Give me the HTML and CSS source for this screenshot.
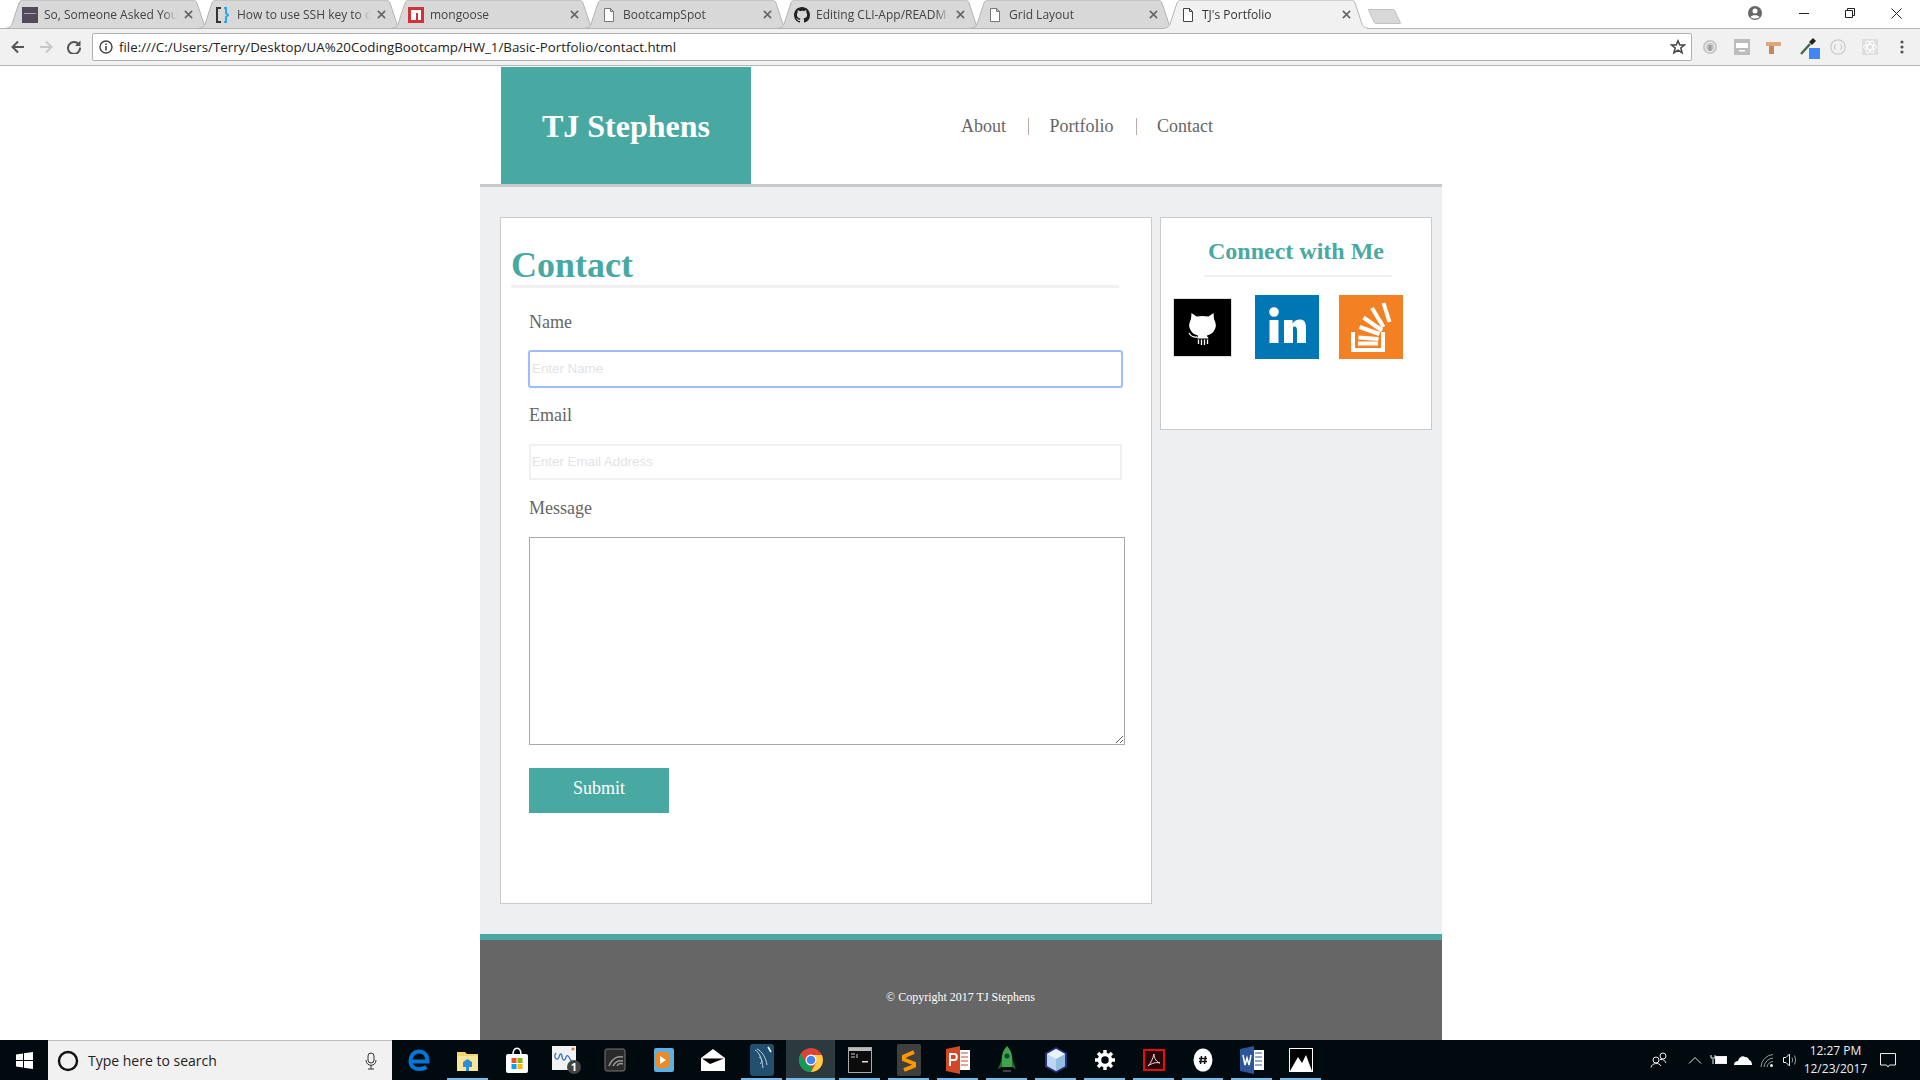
FILE: index.html
```html
<!DOCTYPE html>
<html lang="en">
<head>
<meta charset="utf-8">
<title>TJ's Portfolio</title>
<link rel="stylesheet" href="styles.css">
</head>
<body>
<div class="screen">
  <div class="tabstrip">
    <div class="tab">
      <svg class="tab-shape" viewBox="0 0 204 29"><path d="M0 28C4 28 5 26 6 24L13 3C14 1 15 0 17 0H187C189 0 190 1 191 3L198 24C199 26 200 28 204 28"/></svg>
      <svg class="fav" viewBox="0 0 16 16"><rect x="0" y="0" width="16" height="16" fill="#514a5c"/><rect x="2" y="6" width="12" height="1" fill="#aaa"/></svg>
      <span class="tab-title">So, Someone Asked You t</span>
      <svg class="tab-x" viewBox="0 0 10 10"><path d="M1 1L9 9M9 1L1 9"/></svg>
    </div>
    <div class="tab">
      <svg class="tab-shape" viewBox="0 0 204 29"><path d="M0 28C4 28 5 26 6 24L13 3C14 1 15 0 17 0H187C189 0 190 1 191 3L198 24C199 26 200 28 204 28"/></svg>
      <svg class="fav" viewBox="0 0 16 16"><path d="M6 1H2V15H6" fill="none" stroke="#333" stroke-width="2"/><path d="M9 1H11V6L13 8L11 10V15H9" fill="none" stroke="#2ea8e8" stroke-width="2"/></svg>
      <span class="tab-title">How to use SSH key to c</span>
      <svg class="tab-x" viewBox="0 0 10 10"><path d="M1 1L9 9M9 1L1 9"/></svg>
    </div>
    <div class="tab">
      <svg class="tab-shape" viewBox="0 0 204 29"><path d="M0 28C4 28 5 26 6 24L13 3C14 1 15 0 17 0H187C189 0 190 1 191 3L198 24C199 26 200 28 204 28"/></svg>
      <svg class="fav" viewBox="0 0 16 16"><rect width="16" height="16" fill="#cf3338"/><path d="M3 13V3H13V13H10V6H8V13Z" fill="#fff"/></svg>
      <span class="tab-title">mongoose</span>
      <svg class="tab-x" viewBox="0 0 10 10"><path d="M1 1L9 9M9 1L1 9"/></svg>
    </div>
    <div class="tab">
      <svg class="tab-shape" viewBox="0 0 204 29"><path d="M0 28C4 28 5 26 6 24L13 3C14 1 15 0 17 0H187C189 0 190 1 191 3L198 24C199 26 200 28 204 28"/></svg>
      <svg class="fav" viewBox="0 0 16 16"><path d="M3.5 1.5H9.5L12.5 4.5V14.5H3.5ZM9.5 1.5V4.5H12.5" fill="#fff" stroke="#777"/></svg>
      <span class="tab-title">BootcampSpot</span>
      <svg class="tab-x" viewBox="0 0 10 10"><path d="M1 1L9 9M9 1L1 9"/></svg>
    </div>
    <div class="tab">
      <svg class="tab-shape" viewBox="0 0 204 29"><path d="M0 28C4 28 5 26 6 24L13 3C14 1 15 0 17 0H187C189 0 190 1 191 3L198 24C199 26 200 28 204 28"/></svg>
      <svg class="fav" viewBox="0 0 16 16"><path fill="#222" d="M8 0C3.58 0 0 3.58 0 8c0 3.54 2.29 6.53 5.47 7.59.4.07.55-.17.55-.38v-1.34c-2.23.48-2.69-1.07-2.69-1.07-.36-.93-.89-1.17-.89-1.17-.73-.5.05-.49.05-.49.8.06 1.23.82 1.23.82.71 1.22 1.87.87 2.33.66.07-.52.28-.87.51-1.07-1.78-.2-3.64-.89-3.64-3.95 0-.87.31-1.59.82-2.15-.08-.2-.36-1.02.08-2.12 0 0 .67-.21 2.2.82A7.6 7.6 0 0 1 8 3.87c.68 0 1.36.09 2 .27 1.53-1.04 2.2-.82 2.2-.82.44 1.1.16 1.92.08 2.12.51.56.82 1.27.82 2.15 0 3.07-1.87 3.75-3.65 3.95.29.25.54.73.54 1.48v2.2c0 .21.15.46.55.38A8 8 0 0 0 16 8c0-4.42-3.58-8-8-8z"/></svg>
      <span class="tab-title">Editing CLI-App/READM</span>
      <svg class="tab-x" viewBox="0 0 10 10"><path d="M1 1L9 9M9 1L1 9"/></svg>
    </div>
    <div class="tab">
      <svg class="tab-shape" viewBox="0 0 204 29"><path d="M0 28C4 28 5 26 6 24L13 3C14 1 15 0 17 0H187C189 0 190 1 191 3L198 24C199 26 200 28 204 28"/></svg>
      <svg class="fav" viewBox="0 0 16 16"><path d="M3.5 1.5H9.5L12.5 4.5V14.5H3.5ZM9.5 1.5V4.5H12.5" fill="#fff" stroke="#777"/></svg>
      <span class="tab-title">Grid Layout</span>
      <svg class="tab-x" viewBox="0 0 10 10"><path d="M1 1L9 9M9 1L1 9"/></svg>
    </div>
    <div class="tab tab-active">
      <svg class="tab-shape" viewBox="0 0 204 29"><path d="M0 29V28C4 28 5 26 6 24L13 3C14 1 15 0 17 0H187C189 0 190 1 191 3L198 24C199 26 200 28 204 28V29"/></svg>
      <svg class="fav" viewBox="0 0 16 16"><path d="M3.5 1.5H9.5L12.5 4.5V14.5H3.5ZM9.5 1.5V4.5H12.5" fill="#fff" stroke="#444"/></svg>
      <span class="tab-title">TJ's Portfolio</span>
      <svg class="tab-x" viewBox="0 0 10 10"><path d="M1 1L9 9M9 1L1 9"/></svg>
    </div>
    <div class="newtab"></div>
    <div class="winctl">
      <div class="winbtn winbtn-person"><svg width="14" height="14" viewBox="0 0 14 14"><circle cx="7" cy="7" r="7" fill="#666"/><circle cx="7" cy="5" r="2.5" fill="#fff"/><path d="M2.5 11C3.5 8.7 10.5 8.7 11.5 11C9 13 5 13 2.5 11Z" fill="#fff"/></svg></div>
      <div class="winbtn"><svg width="10" height="10" viewBox="0 0 10 10"><path d="M0 5.5H10" stroke="#222"/></svg></div>
      <div class="winbtn"><svg width="10" height="10" viewBox="0 0 10 10"><path d="M.5 2.5H7.5V9.5H.5ZM2.5 2.5V.5H9.5V7.5H7.5" fill="none" stroke="#222"/></svg></div>
      <div class="winbtn"><svg width="11" height="11" viewBox="0 0 11 11"><path d="M.5 .5L10.5 10.5M10.5 .5L.5 10.5" stroke="#222"/></svg></div>
    </div>
  </div>

  <div class="toolbar">
    <div class="tool"><svg width="14" height="14" viewBox="0 0 14 14"><path d="M13 7H2M7 1.500L1.500 7L7 12.500" fill="none" stroke="#555" stroke-width="2"/></svg></div>
    <div class="tool"><svg width="14" height="14" viewBox="0 0 14 14"><path d="M1 7H12M7 1.500L12.500 7L7 12.500" fill="none" stroke="#c8c8c8" stroke-width="2"/></svg></div>
    <div class="tool"><svg width="14" height="14" viewBox="0 0 14 14"><path d="M11.500 4A6 6 0 1 0 13 7.500" fill="none" stroke="#555" stroke-width="2"/><path d="M13.500 .5V6H8Z" fill="#555"/></svg></div>
    <div class="omnibox">
      <svg class="omni-info" width="14" height="14" viewBox="0 0 14 14"><circle cx="7" cy="7" r="6" fill="none" stroke="#444" stroke-width="1.400"/><path d="M7 6V10.500M7 3.500V5" stroke="#444" stroke-width="1.600"/></svg>
      <span class="url">file:///C:/Users/Terry/Desktop/UA%20CodingBootcamp/HW_1/Basic-Portfolio/contact.html</span>
      <svg class="omni-star" width="16" height="16" viewBox="0 0 16 16"><path d="M8 1.800L9.800 6H14.500L10.800 9L12.100 13.800L8 11.100L3.900 13.800L5.200 9L1.500 6H6.200Z" fill="none" stroke="#444" stroke-width="1.500"/></svg>
    </div>
    <div class="ext-row">
      <div class="ext"><svg width="16" height="16" viewBox="0 0 16 16"><circle cx="8" cy="8" r="7" fill="#c4c4c4"/><circle cx="8" cy="8" r="4.600" fill="none" stroke="#eee" stroke-width="1.200"/><rect x="6.600" y="6" width="2.800" height="6" fill="#999"/></svg></div>
      <div class="ext"><svg width="16" height="16" viewBox="0 0 16 16"><rect width="16" height="16" fill="#bcbcbc"/><rect x="2" y="4" width="12" height="5" fill="#fff"/><rect x="5" y="11" width="6" height="1.500" fill="#fff"/></svg></div>
      <div class="ext"><svg width="16" height="16" viewBox="0 0 16 16"><path d="M0 3H15V7H8V15H3V7H0Z" fill="#dca779"/><path d="M3 7H8V15H3Z" fill="#c18a5c"/></svg></div>
      <div class="ext ext-picker"><svg width="24" height="24" viewBox="0 0 24 24"><path d="M3 19L12 9" stroke="#3e6a4a" stroke-width="2.400"/><path d="M11 7L15 3L18 6L14 10Z" fill="#222"/><rect x="11" y="13" width="11" height="11" fill="#4285f4"/></svg></div>
      <div class="ext"><svg width="16" height="16" viewBox="0 0 16 16"><circle cx="8" cy="8" r="7.200" fill="none" stroke="#c8c8c8" stroke-width="1.200"/><path d="M5.500 5.500C4.500 5.500 5 8 4 8C5 8 4.500 10.500 5.500 10.500M10.500 5.500C11.500 5.500 11 8 12 8C11 8 11.500 10.500 10.500 10.500" fill="none" stroke="#bbb"/></svg></div>
      <div class="ext"><svg width="16" height="16" viewBox="0 0 16 16"><rect width="16" height="16" fill="#dedede"/><ellipse cx="8" cy="8" rx="6.500" ry="2.600" fill="none" stroke="#fff"/><ellipse cx="8" cy="8" rx="6.500" ry="2.600" fill="none" stroke="#fff" transform="rotate(60 8 8)"/><ellipse cx="8" cy="8" rx="6.500" ry="2.600" fill="none" stroke="#fff" transform="rotate(120 8 8)"/></svg></div>
      <div class="ext"><svg width="4" height="14" viewBox="0 0 4 14"><circle cx="2" cy="2" r="1.600" fill="#555"/><circle cx="2" cy="7" r="1.600" fill="#555"/><circle cx="2" cy="12" r="1.600" fill="#555"/></svg></div>
    </div>
  </div>

  <div class="viewport">
    <div class="wrapper">
      <header class="site-header">
        <div class="brand">TJ Stephens</div>
        <nav class="site-nav">
          <a class="nav-link">About</a>
          <a class="nav-link">Portfolio</a>
          <a class="nav-link nav-last">Contact</a>
        </nav>
      </header>
      <main class="main">
        <section class="card contact-card">
          <h1 class="contact-title">Contact</h1>
          <form class="contact-form">
            <label class="field-label">Name</label>
            <input class="field field-focus" type="text" placeholder="Enter Name">
            <label class="field-label">Email</label>
            <input class="field" type="text" placeholder="Enter Email Address">
            <label class="field-label">Message</label>
            <textarea class="message"></textarea>
            <button class="submit" type="button">Submit</button>
          </form>
        </section>
        <aside class="card side-card">
          <h2 class="side-title">Connect with Me</h2>
          <hr class="side-rule">
          <div class="social">
            <svg class="soc-gh" width="59" height="59" viewBox="0 0 59 59"><rect x=".5" y=".5" width="58" height="58" fill="#000" stroke="#ddd"/><path d="M18.500 15L23.500 18.500Q29.500 17.500 35.500 18.500L40.500 15L41 21Q44 27 42 31Q40 36 34 37.500L35 41H24L25 37.500Q19 36 17 31Q15 27 18 21Z" fill="#fff"/><path d="M16 35Q19 40 24 39M25.500 39V46M28.500 39V47M31.500 39V47M34.500 39V46" fill="none" stroke="#fff" stroke-width="1.300"/><path d="M24 41H35" stroke="#000" stroke-width="1"/></svg>
            <svg class="soc-li" width="64" height="64" viewBox="0 0 64 64"><rect width="64" height="64" fill="#0077b5"/><circle cx="19" cy="17" r="4.800" fill="#fff"/><rect x="14.500" y="25" width="9" height="23" fill="#fff"/><path d="M29 25H37.500V28.500C39 26 42 24.500 45 24.500C51 24.500 51 30 51 34V48H42V36C42 33 41.500 31.500 39.500 31.500C37.500 31.500 38 33 38 36V48H29Z" fill="#fff"/></svg>
            <svg class="soc-so" width="64" height="64" viewBox="0 0 64 64"><rect width="64" height="64" fill="#f48024"/><path d="M14 37V55H44V37" fill="none" stroke="#fff" stroke-width="4"/><path d="M19 48.500H39M19.500 42.500L39.500 44M20.500 32L40.500 39M24.500 22.500L43 35.500M33 13L44.500 32M44.500 8L50.500 27" fill="none" stroke="#fff" stroke-width="4"/></svg>
          </div>
        </aside>
      </main>
      <footer class="site-footer">© Copyright 2017 TJ Stephens</footer>
    </div>
  </div>

  <div class="taskbar">
    <div class="start"><svg width="17" height="17" viewBox="0 0 17 17"><path d="M0 2.500L7 1.500V8H0ZM8 1.300L17 0V8H8ZM0 9H7V15.500L0 14.500ZM8 9H17V17L8 15.700Z" fill="#fff"/></svg></div>
    <div class="searchbox">
      <svg class="search-ring" width="22" height="22" viewBox="0 0 22 22"><circle cx="11" cy="11" r="9" fill="none" stroke="#111" stroke-width="2.400"/></svg>
      <span class="search-text">Type here to search</span>
      <svg class="search-mic" width="12" height="18" viewBox="0 0 12 18"><rect x="3" y="1" width="6" height="10" rx="3" fill="none" stroke="#333"/><path d="M1 8C1 15 11 15 11 8M6 13V17M3 17H9" fill="none" stroke="#333"/></svg>
    </div>
    <div class="apps">
      <div class="app"><svg width="24" height="24" viewBox="0 0 24 24"><path d="M3.500 13.500H20.500C20.500 7 17 3.500 12 3.500C7 3.500 3.500 7.500 3.500 13C3.500 18 7 21 12.500 21C15.500 21 18 20 19.500 19" fill="none" stroke="#0078d7" stroke-width="4"/></svg></div>
      <div class="app app-run"><svg width="24" height="24" viewBox="0 0 24 24"><path d="M1 4H9L11 6H22V23H1Z" fill="#f6d56a"/><rect x="1" y="8" width="21" height="15" fill="#fbe59a"/><path d="M7 19V14L11.500 11L16 14V19H13V23H10V19Z" fill="#2a8fd4"/></svg></div>
      <div class="app"><svg width="24" height="26" viewBox="0 0 24 26"><path d="M8 8C8 -1 16 -1 16 8" fill="none" stroke="#fff" stroke-width="1.500"/><rect x="1" y="7" width="22" height="19" rx="2" fill="#fff"/><rect x="6.500" y="11" width="5" height="5" fill="#f25022"/><rect x="12.500" y="11" width="5" height="5" fill="#7fba00"/><rect x="6.500" y="17" width="5" height="5" fill="#00a4ef"/><rect x="12.500" y="17" width="5" height="5" fill="#ffb900"/></svg></div>
      <div class="app"><svg width="32" height="32" viewBox="0 0 32 32"><rect x="2" y="2" width="24" height="24" fill="#f2f2f2"/><path d="M6 9C3 13 7 18 9 13C10 9 12 9 12 13C13 17 15 17 16 13C17 9 20 14 22 19" fill="none" stroke="#3a78b8" stroke-width="1.300"/><circle cx="23" cy="5" r="1.600" fill="#e8743b"/><circle cx="24" cy="23" r="7" fill="#444"/><text class="badge-num" x="24" y="27">1</text></svg></div>
      <div class="app"><svg width="22" height="24" viewBox="0 0 22 24"><rect x="1" y="1" width="20" height="22" rx="2" fill="#2a2a2a" stroke="#777"/><path d="M5 18C8 10 14 8 19 9M9 18C11 14 14 12 19 13M13 18C14 16 16 15 19 16" fill="none" stroke="#999" stroke-width="1.500"/></svg></div>
      <div class="app"><svg width="22" height="26" viewBox="0 0 22 26"><rect x="1" y="1" width="20" height="24" rx="2" fill="#5db0e0"/><rect x="3" y="5" width="13" height="16" rx="3" fill="#f08a24"/><path d="M7 9L13 13L7 17Z" fill="#fff"/></svg></div>
      <div class="app"><svg width="24" height="22" viewBox="0 0 24 22"><path d="M0 9L12 0L24 9V22H0Z" fill="#fff"/><path d="M1 9.500L23 9.500L9 15Z" fill="#000"/></svg></div>
      <div class="app app-run"><svg width="24" height="32" viewBox="0 0 24 32"><rect width="24" height="32" rx="3" fill="#21506f"/><path d="M5 6C9 8 12 14 13 24M7 5C12 7 16 14 17 21M9 13C12 14 13 18 10 20" fill="none" stroke="#b9cfe0"/><path d="M18 3L21 8" stroke="#fff" stroke-width="1.500"/></svg></div>
      <div class="app app-run app-active"><svg width="24" height="24" viewBox="0 0 24 24"><circle cx="12" cy="12" r="12" fill="#db4437"/><path d="M12 24A12 12 0 0 1 1.600 6L7 15Q10 19 13 18Z" fill="#0f9d58"/><path d="M12 24L17.500 14L12 7H22.800A12 12 0 0 1 12 24Z" fill="#ffcd40"/><circle cx="12" cy="12" r="5.500" fill="#fff"/><circle cx="12" cy="12" r="4.300" fill="#4285f4"/></svg></div>
      <div class="app app-run"><svg width="24" height="26" viewBox="0 0 24 26"><rect x=".5" y=".5" width="23" height="25" fill="#0c0c0c" stroke="#aaa"/><rect x="1" y="1" width="22" height="3" fill="#bbb"/><rect x="14" y="14" width="6" height="1.500" fill="#ddd"/><path d="M3 7H7M3 10H7M9 7V11" stroke="#ccc"/></svg></div>
      <div class="app app-run"><svg width="24" height="32" viewBox="0 0 24 32"><rect width="24" height="32" rx="2" fill="#3f3f3f"/><path d="M17 8L7 12.500V15.500L17 19.500V22L7 26" fill="none" stroke="#ff9800" stroke-width="4"/></svg></div>
      <div class="app app-run"><svg width="24" height="28" viewBox="0 0 24 28"><path d="M0 3L14 0V28L0 25Z" fill="#d24726"/><rect x="14" y="4" width="10" height="20" fill="#fff"/><path d="M15 7H22M15 11H22M15 15H22M15 19H22" stroke="#d24726"/><path d="M4 20V8H8.500C11.500 8 11.500 14 8.500 14H4" fill="none" stroke="#fff" stroke-width="2"/></svg></div>
      <div class="app app-run"><svg width="20" height="30" viewBox="0 0 20 30"><path d="M10 1C15 6 16 12 15 22H5C4 12 5 6 10 1Z" fill="#3fa34d"/><circle cx="10" cy="11" r="2.500" fill="#143"/><path d="M5 14L1 24L5 22M15 14L19 24L15 22" fill="#236b30"/><rect x="6" y="25" width="8" height="2" fill="#444"/></svg></div>
      <div class="app app-run"><svg width="24" height="28" viewBox="0 0 24 28"><path d="M12 1L23 7V21L12 27L1 21V7Z" fill="#2c2f7c"/><path d="M12 3L21 8V20L12 25L3 20V8Z" fill="#bcd7ef"/><path d="M12 13L21 8V20L12 25Z" fill="#90bde0"/><path d="M3 8L12 3L21 8L12 13Z" fill="#e8f3fb"/></svg></div>
      <div class="app app-run"><svg width="20" height="20" viewBox="0 0 20 20"><circle cx="10" cy="10" r="5.500" fill="none" stroke="#fff" stroke-width="3.500"/><path d="M10 0V4M10 16V20M0 10H4M16 10H20M3 3L5.800 5.800M14.200 14.200L17 17M17 3L14.200 5.800M5.800 14.200L3 17" stroke="#fff" stroke-width="3.400"/></svg></div>
      <div class="app app-run"><svg width="22" height="22" viewBox="0 0 22 22"><rect x="1" y="1" width="20" height="20" fill="#2a0505" stroke="#e01010" stroke-width="2"/><path d="M11 5C10 9 8 14 5 17C9 14 13 13 17 14C14 13 11 10 11 5Z" fill="none" stroke="#e8d8d8"/></svg></div>
      <div class="app app-run"><svg width="20" height="24" viewBox="0 0 20 24"><ellipse cx="10" cy="12" rx="9.500" ry="11.500" fill="#fff"/><path d="M8.500 8L7.500 16M12.500 8L11.500 16M6 10.500H14M6 13.500H14" stroke="#111" stroke-width="1.500"/></svg></div>
      <div class="app app-run"><svg width="24" height="28" viewBox="0 0 24 28"><path d="M0 3L14 0V28L0 25Z" fill="#2b579a"/><rect x="14" y="4" width="10" height="20" fill="#fff"/><path d="M15 7H22M15 11H22M15 15H22M15 19H22" stroke="#2b579a"/><path d="M3 9L5 19L7 12L9 19L11 9" fill="none" stroke="#fff" stroke-width="1.500"/></svg></div>
      <div class="app app-run"><svg width="24" height="24" viewBox="0 0 24 24"><rect width="24" height="24" fill="#000" stroke="#fff" stroke-width="2"/><path d="M1 23L9 9L13 15L17 7L23 23Z" fill="#fff"/></svg></div>
    </div>
    <div class="tray">
      <div class="tray-item tray-people"><svg width="18" height="16" viewBox="0 0 18 16"><circle cx="6" cy="8" r="3" fill="none" stroke="#eee"/><circle cx="13" cy="4" r="3" fill="none" stroke="#eee"/><path d="M1 15.500C1.500 11 9 10 11 14M10 7.500C13 7 15 8.500 16 11" fill="none" stroke="#eee"/></svg></div>
      <div class="tray-item"><svg width="14" height="8" viewBox="0 0 14 8"><path d="M1 7.500L7 1.500L13 7.500" fill="none" stroke="#ddd"/></svg></div>
      <div class="tray-item"><svg width="18" height="12" viewBox="0 0 18 12"><rect x="5.500" y="2.500" width="11" height="7" fill="#fff" stroke="#eee"/><path d="M1 1V4H5V1M3 5V10" fill="none" stroke="#eee"/></svg></div>
      <div class="tray-item"><svg width="18" height="10" viewBox="0 0 18 10"><path d="M0 10C0 7 2 6 4 6C5 2 9 0 11 2C14 2 15 4 15 5C17 5 18 8 18 10Z" fill="#fff"/></svg></div>
      <div class="tray-item"><svg width="14" height="14" viewBox="0 0 14 14"><path d="M1 14A13 13 0 0 1 13 1.500M4 14A10 10 0 0 1 13 5M7 14A7 7 0 0 1 13 8.500" fill="none" stroke="#999"/><circle cx="11.500" cy="12.500" r="1.500" fill="#eee"/></svg></div>
      <div class="tray-item"><svg width="16" height="14" viewBox="0 0 16 14"><path d="M.5 4.500H3L6.500 1V13L3 9.500H.5Z" fill="none" stroke="#eee"/><path d="M9 4.500Q10.500 7 9 9.500M11.500 2.500Q14 7 11.500 11.500" fill="none" stroke="#999"/></svg></div>
      <div class="clock"><span>12:27 PM</span><span>12/23/2017</span></div>
      <div class="notify"><svg width="16" height="15" viewBox="0 0 16 15"><path d="M.5 .5H15.500V12H9.500L8 14L6.500 12H.5Z" fill="none" stroke="#eee"/></svg></div>
    </div>
  </div>
</div>
</body>
</html>
```

FILE: styles.css
```css
* { box-sizing: border-box; }
html, body { margin: 0; height: 100%; overflow: hidden; background: #fff; }

.screen { width: 1920px; height: 1080px; display: flex; flex-direction: column; overflow: hidden; }

/* browser chrome */
.tabstrip {
  height: 29px; flex: none; display: flex; padding-left: 6px; background: #fff;
  box-shadow: inset 0 -1px 0 #b4b4b4;
  font: 12px "Open Sans", "Noto Sans", sans-serif; color: #444;
}
.tab { position: relative; width: 204px; height: 29px; margin-right: -11px; padding-left: 16px; display: flex; align-items: center; flex: none; }
.tab-shape { position: absolute; left: 0; top: 0; width: 204px; height: 29px; }
.tab-shape path { fill: #d8d8d8; stroke: #b4b4b4; stroke-width: 1; }
.tab-active { z-index: 2; color: #333; }
.tab-active .tab-shape path { fill: #f1f1f1; }
.fav { position: relative; width: 16px; height: 16px; flex: none; margin-right: 6px; }
.tab-title {
  position: relative; width: 133px; white-space: nowrap; flex: none;
  -webkit-mask-image: linear-gradient(to right, #000 90%, transparent);
  mask-image: linear-gradient(to right, #000 90%, transparent);
}
.tab-x { position: relative; width: 9px; height: 9px; margin-left: 7px; flex: none; }
.tab-x path { stroke: #666; stroke-width: 1.800; fill: none; }
.newtab {
  width: 27px; height: 15px; margin: 9px 0 0 14px; flex: none; background: #d8d8d8;
  border: 1px solid #c0c0c0; border-radius: 2px; transform: skewX(25deg);
}
.winctl { margin-left: auto; display: flex; padding-right: 1px; height: 26px; }
.winbtn { width: 46px; display: flex; align-items: center; justify-content: center; }
.winbtn-person { margin-right: 3px; }

.toolbar {
  height: 37px; flex: none; display: flex; align-items: center; padding-left: 4px;
  background: #f1f1f1; border-bottom: 1px solid #b4b4b4;
}
.tool { width: 28px; display: flex; justify-content: center; }
.omnibox {
  width: 1600px; height: 28px; margin-left: 4px; background: #fff; border: 1px solid #b0b0b0; border-radius: 2px;
  display: flex; align-items: center; padding: 0 5px 0 6px;
}
.omni-info { flex: none; margin-right: 6px; }
.url { font: 13.33px "Open Sans", "Noto Sans", sans-serif; color: #222; white-space: nowrap; flex: 1; }
.omni-star { flex: none; }
.ext-row { display: flex; margin-left: 2px; }
.ext { width: 32px; display: flex; align-items: center; justify-content: center; height: 28px; }
.ext-picker svg { margin-left: 8px; }

/* page */
.viewport { flex: 1; min-height: 0; overflow: hidden; background: #fff; }
.wrapper { width: 962px; margin: 0 auto 0 480px; padding-top: 1px; font-family: "Liberation Serif", "Times New Roman", serif; }
.site-header { height: 120px; display: flex; padding-left: 21px; border-bottom: 3px solid #c9c9c9; background: #fff; }
.brand {
  width: 250px; background: #48a9a3; color: #fff; font-size: 32px; font-weight: bold; padding-top: 2px;
  display: flex; align-items: center; justify-content: center;
}
.site-nav { display: flex; align-items: center; margin-left: 210px; padding-top: 2px; }
.nav-link { font-size: 18px; color: #666; padding-right: 22px; margin-right: 20.5px; line-height: 17px; border-right: 1px solid #bfa9a4; }
.nav-last { border-right: 0; }

.main { background: #eeeff1; display: flex; align-items: flex-start; gap: 8px; padding: 30px 0 30px 20px; }
.card { background: #fff; border: 1px solid #cbcbcb; }
.contact-card { width: 652px; height: 687px; padding: 27px 0 0 10px; }
.contact-title {
  margin: 0; width: 608px; height: 43px; line-height: 40px; font-size: 36px; font-weight: bold; color: #48a9a3;
  border-bottom: 3px solid #f0f0f0;
}
.contact-form { display: flex; flex-direction: column; align-items: flex-start; padding: 22px 0 0 18px; }
.field-label { font-size: 18px; line-height: 24px; color: #666; margin-bottom: 17px; }
.field {
  width: 593px; height: 36px; margin-bottom: 16px; padding: 0 1px 2px; background: #fff;
  border: 2px solid #f0f0f0; border-radius: 1px; font: 13.33px "Liberation Sans", Arial, sans-serif; outline: 0;
}
.field::placeholder { color: #e3e3e6; opacity: 1; }
.field-focus { border-color: #9fbdfb; box-shadow: 0 0 0 1px #9fbdfb; border-width: 1px; padding: 0 2px 2px; border-radius: 2px; }
.message { width: 596px; height: 208px; margin: 0 0 23px; border: 1px solid #a9a9a9; background: #fff; padding: 2px; outline: 0; }
.submit {
  width: 140px; height: 45px; background: #48a9a3; color: #fff; border: 0; padding: 0 0 5px;
  font: 18px "Liberation Serif", "Times New Roman", serif;
}

.side-card { width: 272px; height: 213px; padding-top: 19px; }
.side-title { margin: 0; font-size: 24px; line-height: 28px; font-weight: bold; color: #48a9a3; text-align: center; }
.side-rule { width: 188px; height: 2px; margin: 10px 0 0 43px; border: 0; background: #f0f0f0; }
.social { display: flex; align-items: center; padding: 18px 0 0 12px; }
.soc-gh { flex: none; }
.soc-li { flex: none; margin-left: 23px; }
.soc-so { flex: none; margin-left: 20px; }

.site-footer {
  height: 120px; background: #666; border-top: 6px solid #48a9a3; color: #fff;
  font-size: 12px; line-height: 16px; text-align: center; padding: 49px 1px 0 0;
}

/* taskbar */
.taskbar { height: 40px; flex: none; display: flex; background: #010a0f; font-family: "Open Sans", "Noto Sans", sans-serif; }
.start { width: 48px; display: flex; align-items: center; justify-content: center; }
.searchbox {
  width: 344px; display: flex; align-items: center; padding: 0 12px 0 9px; background: #f1f1f1; border-top: 1px solid #bbb;
}
.search-ring { flex: none; margin-right: 9px; }
.search-text { flex: 1; font-size: 14px; color: #222; }
.search-mic { flex: none; margin-right: 3px; }
.apps { display: flex; margin-left: 2px; }
.app { width: 41px; margin: 0 4px; display: flex; align-items: center; justify-content: center; }
.app svg { flex: none; }
.app-run { box-shadow: inset 0 -2px 0 #76b9ed; }
.app-active { width: 49px; margin: 0; background: #2d3a3d; }
.badge-num { font: bold 11px "Open Sans", sans-serif; fill: #fff; text-anchor: middle; }
.tray { margin-left: auto; display: flex; align-items: center; padding-right: 13px; color: #eee; height: 40px; }
.tray-item { width: 24px; display: flex; align-items: center; justify-content: center; }
.tray-people { margin-right: 12px; }
.clock { width: 65px; display: flex; flex-direction: column; align-items: center; font-size: 12px; line-height: 18px; }
.clock span { white-space: nowrap; }
.notify { width: 39px; display: flex; justify-content: center; }
```
